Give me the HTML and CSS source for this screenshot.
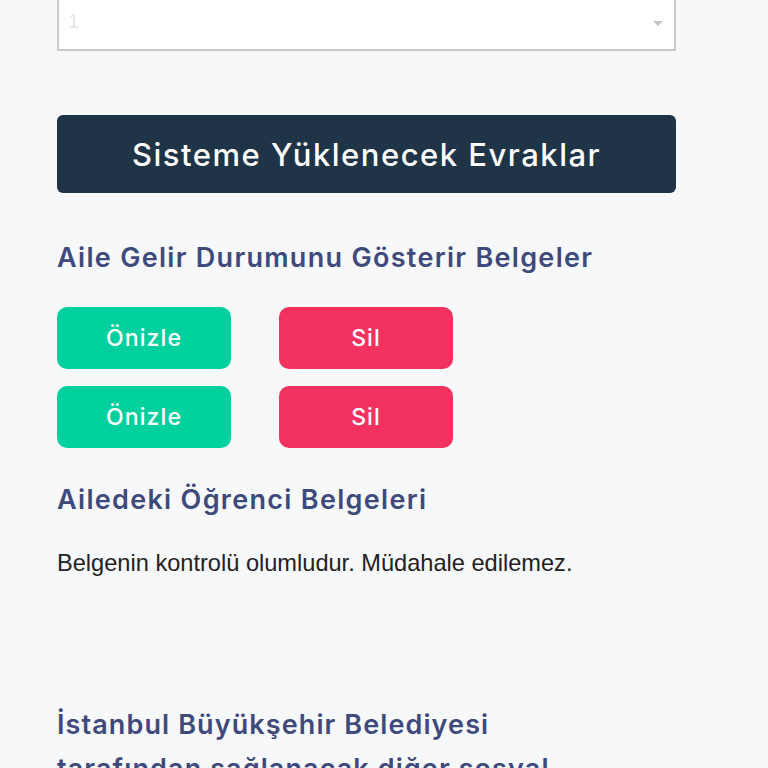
FILE: index.html
```html
<!DOCTYPE html>
<html lang="tr">
<head>
<meta charset="utf-8">
<link rel="stylesheet" href="styles.css">
</head>
<body>
<div class="page">
  <div class="select">
    <span class="select-value">1</span>
    <span class="select-arrow"></span>
  </div>
  <div class="banner">Sisteme Yüklenecek Evraklar</div>
  <h2 class="section-title first">Aile Gelir Durumunu Gösterir Belgeler</h2>
  <div class="doc-rows">
    <div class="doc-row">
      <button class="btn btn-preview">Önizle</button>
      <button class="btn btn-delete">Sil</button>
    </div>
    <div class="doc-row">
      <button class="btn btn-preview">Önizle</button>
      <button class="btn btn-delete">Sil</button>
    </div>
  </div>
  <h2 class="section-title">Ailedeki Öğrenci Belgeleri</h2>
  <p class="note">Belgenin kontrolü olumludur. Müdahale edilemez.</p>
  <h2 class="section-title big">İstanbul Büyükşehir Belediyesi tarafından sağlanacak diğer sosyal yardımlar</h2>
</div>
</body>
</html>
```

FILE: styles.css
```css
html, body {
  margin: 0;
  padding: 0;
  background: #f7f8fa;
}
body {
  font-family: "Inter", "Noto Sans", sans-serif;
  overflow: hidden;
  height: 768px;
}
.page {
  width: 619px;
  padding-left: 57px;
}
.select {
  margin-top: -12px;
  height: 63px;
  box-sizing: border-box;
  background: #fff;
  border: 2px solid #cacaca;
  display: flex;
  align-items: center;
  justify-content: space-between;
  padding: 0 11px 0 9px;
}
.select-value {
  font-family: "Liberation Sans", Arial, sans-serif;
  font-size: 20px;
  color: #e4e4e4;
  margin-top: 4px;
}
.select-arrow {
  width: 0;
  height: 0;
  border-left: 5px solid transparent;
  border-right: 5px solid transparent;
  border-top: 5px solid #c4c4c4;
  margin-top: 8px;
}
.banner {
  margin-top: 64px;
  height: 78px;
  background: #1f3447;
  border-radius: 6px;
  color: #fff;
  display: flex;
  align-items: center;
  justify-content: center;
  font-size: 31px;
  font-weight: 500;
  letter-spacing: 1.5px;
}
.section-title {
  margin: 0;
  color: #3f4a7c;
  font-size: 27px;
  font-weight: 600;
  line-height: 34px;
  letter-spacing: 1.3px;
}
.section-title.first {
  margin-top: 48px;
}
.doc-rows {
  margin-top: 32px;
  display: flex;
  flex-direction: column;
  gap: 17px;
}
.doc-row {
  display: flex;
  gap: 48px;
}
.btn {
  width: 174px;
  height: 62px;
  border: 0;
  border-radius: 10px;
  color: #fff;
  font-family: inherit;
  font-size: 23px;
  font-weight: 500;
  letter-spacing: 1.1px;
  padding: 0;
}
.btn-preview { background: #00d09e; }
.btn-delete { background: #f3325f; }
.doc-rows + .section-title {
  margin-top: 35px;
}
.note {
  margin: 33px 0 0;
  font-family: "Liberation Sans", Arial, sans-serif;
  font-size: 23.6px;
  color: #222;
}
.section-title.big {
  margin-top: 126px;
  font-size: 27px;
  line-height: 44px;
  letter-spacing: 1.1px;
  width: 580px;
}
```
